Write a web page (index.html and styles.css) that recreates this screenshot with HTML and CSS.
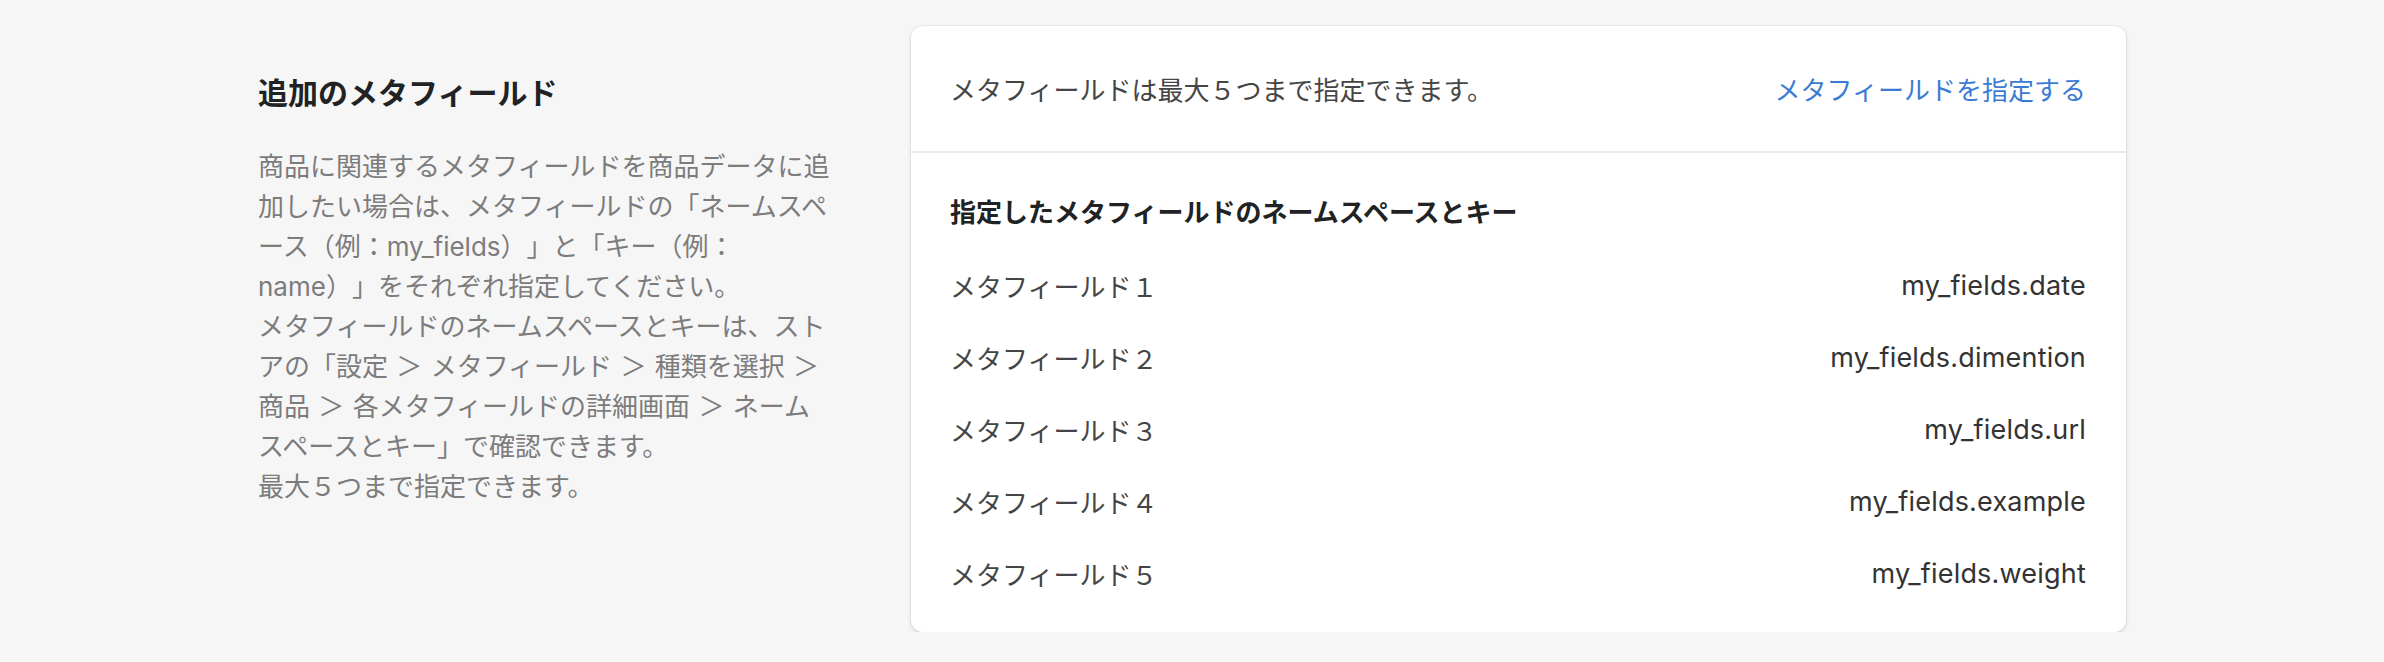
FILE: index.html
```html
<!DOCTYPE html>
<html lang="ja">
<head>
  <meta charset="UTF-8">
  <meta name="viewport" content="width=device-width, initial-scale=1.0">
  <title>追加のメタフィールド</title>
  <link rel="stylesheet" href="styles.css">
</head>
<body>
  <div class="layout">
    <div class="annotation">
      <h2>追加のメタフィールド</h2>
      <p>商品に関連するメタフィールドを商品データに追加したい場合は、メタフィールドの「ネームスペース（例：my_fields）」と「キー（例：name）」をそれぞれ指定してください。<br>メタフィールドのネームスペースとキーは、ストアの「設定 ＞ メタフィールド ＞ 種類を選択 ＞ 商品 ＞ 各メタフィールドの詳細画面 ＞ ネームスペースとキー」で確認できます。<br>最大５つまで指定できます。</p>
    </div>
    <div class="card">
      <div class="card-header">
        <span>メタフィールドは最大５つまで指定できます。</span>
        <a href="#" class="link">メタフィールドを指定する</a>
      </div>
      <div class="card-section">
        <h3>指定したメタフィールドのネームスペースとキー</h3>
        <div id="fieldList"></div>
      </div>
    </div>
  </div>
  <script>
    const fields = ['my_fields.date', 'my_fields.dimention', 'my_fields.url', 'my_fields.example', 'my_fields.weight'];
    const digits = ['１', '２', '３', '４', '５'];
    const list = document.getElementById('fieldList');

    fields.forEach((key, i) => {
      const row = document.createElement('div');
      row.className = 'row';
      row.innerHTML = `
        <span class="label">メタフィールド${digits[i]}</span>
        <span class="value">${key}</span>
      `;
      list.appendChild(row);
    });
  </script>
</body>
</html>
```

FILE: styles.css
```css
:root {
  --bg: #f6f6f7;
  --card-bg: #fff;
  --border: #e9eaeb;
  --heading: #202223;
  --text: #454545;
  --subdued: #7c7c7c;
  --link: #3b7bd4;
}

body {
  margin: 0;
  font-family: "Inter", "Noto Sans CJK JP", sans-serif;
  background: var(--bg);
  color: var(--text);
  text-spacing-trim: space-all;
}

.layout {
  display: flex;
  align-items: flex-start;
  padding: 26px 0 0 258px;
}

.annotation {
  width: 572px;
  margin-right: 81px;
  padding-top: 47px;
}

.annotation h2 {
  margin: 0;
  font-size: 30px;
  line-height: 40px;
  font-weight: 700;
  color: var(--heading);
}

.annotation p {
  margin: 34px 0 0;
  font-size: 26px;
  line-height: 40px;
  word-spacing: 1px;
  color: var(--subdued);
}

.card {
  width: 1215px;
  background: var(--card-bg);
  border-radius: 12px;
  box-shadow: 0 0 0 1px rgba(63, 63, 68, 0.05), 0 2px 4px rgba(63, 63, 68, 0.15);
  font-size: 26px;
}

.card-header {
  display: flex;
  justify-content: space-between;
  align-items: center;
  height: 125px;
  padding: 0 40px 0 39px;
  border-bottom: 2px solid var(--border);
}

.link {
  color: var(--link);
  text-decoration: none;
}

.card-section {
  padding: 24px 40px 23px 39px;
}

.card-section h3 {
  margin: 0;
  font-size: 26px;
  line-height: 72px;
  font-weight: 700;
  color: var(--heading);
}

.row {
  display: flex;
  justify-content: space-between;
  align-items: center;
  height: 72px;
}

.row .value {
  font-size: 27px;
  letter-spacing: 0.2px;
  color: #333;
}
```
